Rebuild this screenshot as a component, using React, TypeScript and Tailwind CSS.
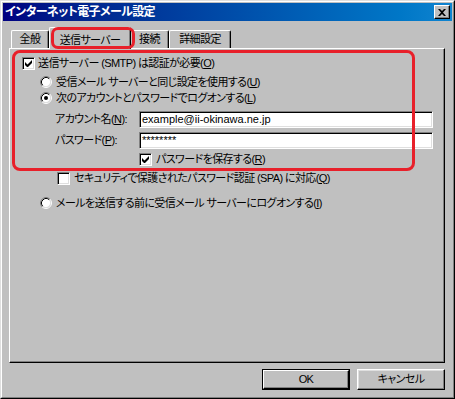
import React from "react";

const FONT = "font-['Liberation_Sans','Noto_Sans_CJK_JP',sans-serif] [font-feature-settings:'palt']";

function U({ c }: { c: string }) {
  return <span className="underline underline-offset-[1px]">{c}</span>;
}

function Checkbox({ checked }: { checked?: boolean }) {
  return (
    <span className="flex h-[13px] w-[13px] shrink-0 items-center justify-center border border-t-[#808080] border-l-[#808080] border-r-white border-b-white bg-white shadow-[inset_1px_1px_0_#000,inset_-1px_-1px_0_#dfdfdf]">
      {checked && (
        <svg width="7" height="7" viewBox="0 0 7 7">
          <path d="M0 2v3l2 2h1l4-4V0L2.5 4.5z" fill="#000" />
        </svg>
      )}
    </span>
  );
}

function Radio({ checked }: { checked?: boolean }) {
  return (
    <svg width="12" height="12" viewBox="0 0 12 12" className="shrink-0">
      <circle cx="6" cy="6" r="4.5" fill="#fff" />
      <path d="M2.11 9.89A5.5 5.5 0 0 1 9.89 2.11" stroke="#808080" fill="none" />
      <path d="M9.89 2.11A5.5 5.5 0 0 1 2.11 9.89" stroke="#fff" fill="none" />
      <path d="M2.82 9.18A4.5 4.5 0 0 1 9.18 2.82" stroke="#000" fill="none" />
      <path d="M9.18 2.82A4.5 4.5 0 0 1 2.82 9.18" stroke="#dfdfdf" fill="none" />
      {checked && <circle cx="6" cy="6" r="2" fill="#000" />}
    </svg>
  );
}

function Input({ value }: { value: string }) {
  return (
    <div className="flex h-[17px] w-[294px] shrink-0 items-center border border-t-[#808080] border-l-[#808080] border-r-white border-b-white bg-white pl-[2px] text-[11px] leading-none tracking-normal text-black shadow-[inset_1px_1px_0_#000,inset_-1px_-1px_0_#dfdfdf]">
      {value}
    </div>
  );
}

const LBL = "whitespace-nowrap leading-none";

export default function App() {
  return (
    <div className={`h-[399px] w-[455px] bg-[#c0c0c0] ${FONT} text-[11px] tracking-[-0.6px] text-black`}>
      <div className="h-full w-full border border-t-[#dfdfdf] border-l-[#dfdfdf] border-r-black border-b-black">
        <div className="flex h-full w-full flex-col border border-t-white border-l-white border-r-[#808080] border-b-[#808080] p-[1px]">
          {/* title bar */}
          <div className="flex h-[18px] shrink-0 items-center justify-between bg-gradient-to-r from-[#000080] to-[#1084d0] pl-[2px] pr-[2px]">
            <span className="text-[12px] font-bold leading-none tracking-[-0.6px] text-white">インターネット電子メール設定</span>
            <span className="flex h-[14px] w-[16px] items-center justify-center border border-t-white border-l-white border-r-black border-b-black bg-[#c0c0c0] shadow-[inset_-1px_-1px_0_#808080]">
              <svg width="8" height="7" viewBox="0 0 8 7">
                <path d="M0 0h2l2 2 2-2h2L5 3.5 8 7H6L4 5 2 7H0l3-3.5z" fill="#000" />
              </svg>
            </span>
          </div>

          {/* tabs */}
          <div className="relative ml-[6px] mt-[6px] flex h-[21px] w-[436px] items-end pl-[2px]">
            <div className="flex h-[18px] w-[38px] items-center justify-center rounded-t-[2px] border-l border-t border-l-white border-t-white border-r border-r-black shadow-[inset_-1px_0_0_#808080]">
              全般
            </div>
            <div className="relative z-10 mb-[-1px] flex h-[22px] w-[82px] items-start justify-center rounded-t-[2px] border-l border-t border-l-white border-t-white border-r border-r-black bg-[#c0c0c0] pt-[4px] shadow-[inset_-1px_0_0_#808080]">
              送信サーバー
            </div>
            <div className="flex h-[18px] w-[38px] items-center justify-center rounded-t-[2px] border-t border-t-white border-r border-r-black shadow-[inset_-1px_0_0_#808080]">
              接続
            </div>
            <div className="flex h-[18px] w-[62px] items-center justify-center rounded-t-[2px] border-l border-t border-l-white border-t-white border-r border-r-black shadow-[inset_-1px_0_0_#808080]">
              詳細設定
            </div>
            {/* annotation around selected tab */}
            <div className="pointer-events-none absolute left-[42px] top-[0px] z-20 h-[22px] w-[84px] rounded-[7px] border-[3px] border-[#e8202a]" />
          </div>

          {/* panel */}
          <div className="relative ml-[6px] flex h-[315px] w-[436px] flex-col border border-t-white border-l-white border-r-black border-b-black shadow-[inset_-1px_-1px_0_#808080]">
            <div className="ml-[12px] mt-[6px] flex h-[16px] items-center">
              <Checkbox checked />
              <span className={`ml-[3px] ${LBL}`}>
                送信サーバー (SMTP) は認証が必要(<U c="O" />)
              </span>
            </div>
            <div className="ml-[30px] mt-[3px] flex h-[16px] items-center">
              <Radio />
              <span className={`ml-[4px] ${LBL}`}>
                受信メール サーバーと同じ設定を使用する(<U c="U" />)
              </span>
            </div>
            <div className="ml-[30px] flex h-[16px] items-center">
              <Radio checked />
              <span className={`ml-[4px] ${LBL}`}>
                次のアカウントとパスワードでログオンする(<U c="L" />)
              </span>
            </div>
            <div className="ml-[45px] mt-[5px] flex items-center">
              <span className={`w-[84px] shrink-0 ${LBL}`}>
                アカウント名(<U c="N" />):
              </span>
              <Input value="example@ii-okinawa.ne.jp" />
            </div>
            <div className="ml-[45px] mt-[4px] flex items-center">
              <span className={`w-[84px] shrink-0 ${LBL}`}>
                パスワード(<U c="P" />):
              </span>
              <Input value="********" />
            </div>
            <div className="ml-[129px] mt-[2px] flex h-[16px] items-center">
              <Checkbox checked />
              <span className={`ml-[4px] ${LBL}`}>
                パスワードを保存する(<U c="R" />)
              </span>
            </div>
            <div className="ml-[47px] mt-[3px] flex h-[16px] items-center">
              <Checkbox />
              <span className={`ml-[4px] ${LBL}`}>
                セキュリティで保護されたパスワード認証 (SPA) に対応(<U c="Q" />)
              </span>
            </div>
            <div className="ml-[30px] mt-[9px] flex h-[16px] items-center">
              <Radio />
              <span className={`ml-[4px] ${LBL}`}>
                メールを送信する前に受信メール サーバーにログオンする(<U c="I" />)
              </span>
            </div>
            {/* annotation box */}
            <div className="pointer-events-none absolute left-[2px] top-[1px] z-20 h-[121px] w-[403px] rounded-[8px] border-[3px] border-[#e8202a]" />
          </div>

          {/* buttons */}
          <div className="mr-[7px] mt-[6px] flex justify-end gap-[7px]">
            <div className="flex h-[21px] w-[88px] items-center justify-center border border-black">
              <div className="flex h-full w-full items-center justify-center border border-t-white border-l-white border-r-black border-b-black shadow-[inset_-1px_-1px_0_#808080]">
                OK
              </div>
            </div>
            <div className="flex h-[21px] w-[88px] items-center justify-center border border-t-white border-l-white border-r-black border-b-black shadow-[inset_-1px_-1px_0_#808080,inset_1px_1px_0_#dfdfdf]">
              キャンセル
            </div>
          </div>
        </div>
      </div>
    </div>
  );
}
